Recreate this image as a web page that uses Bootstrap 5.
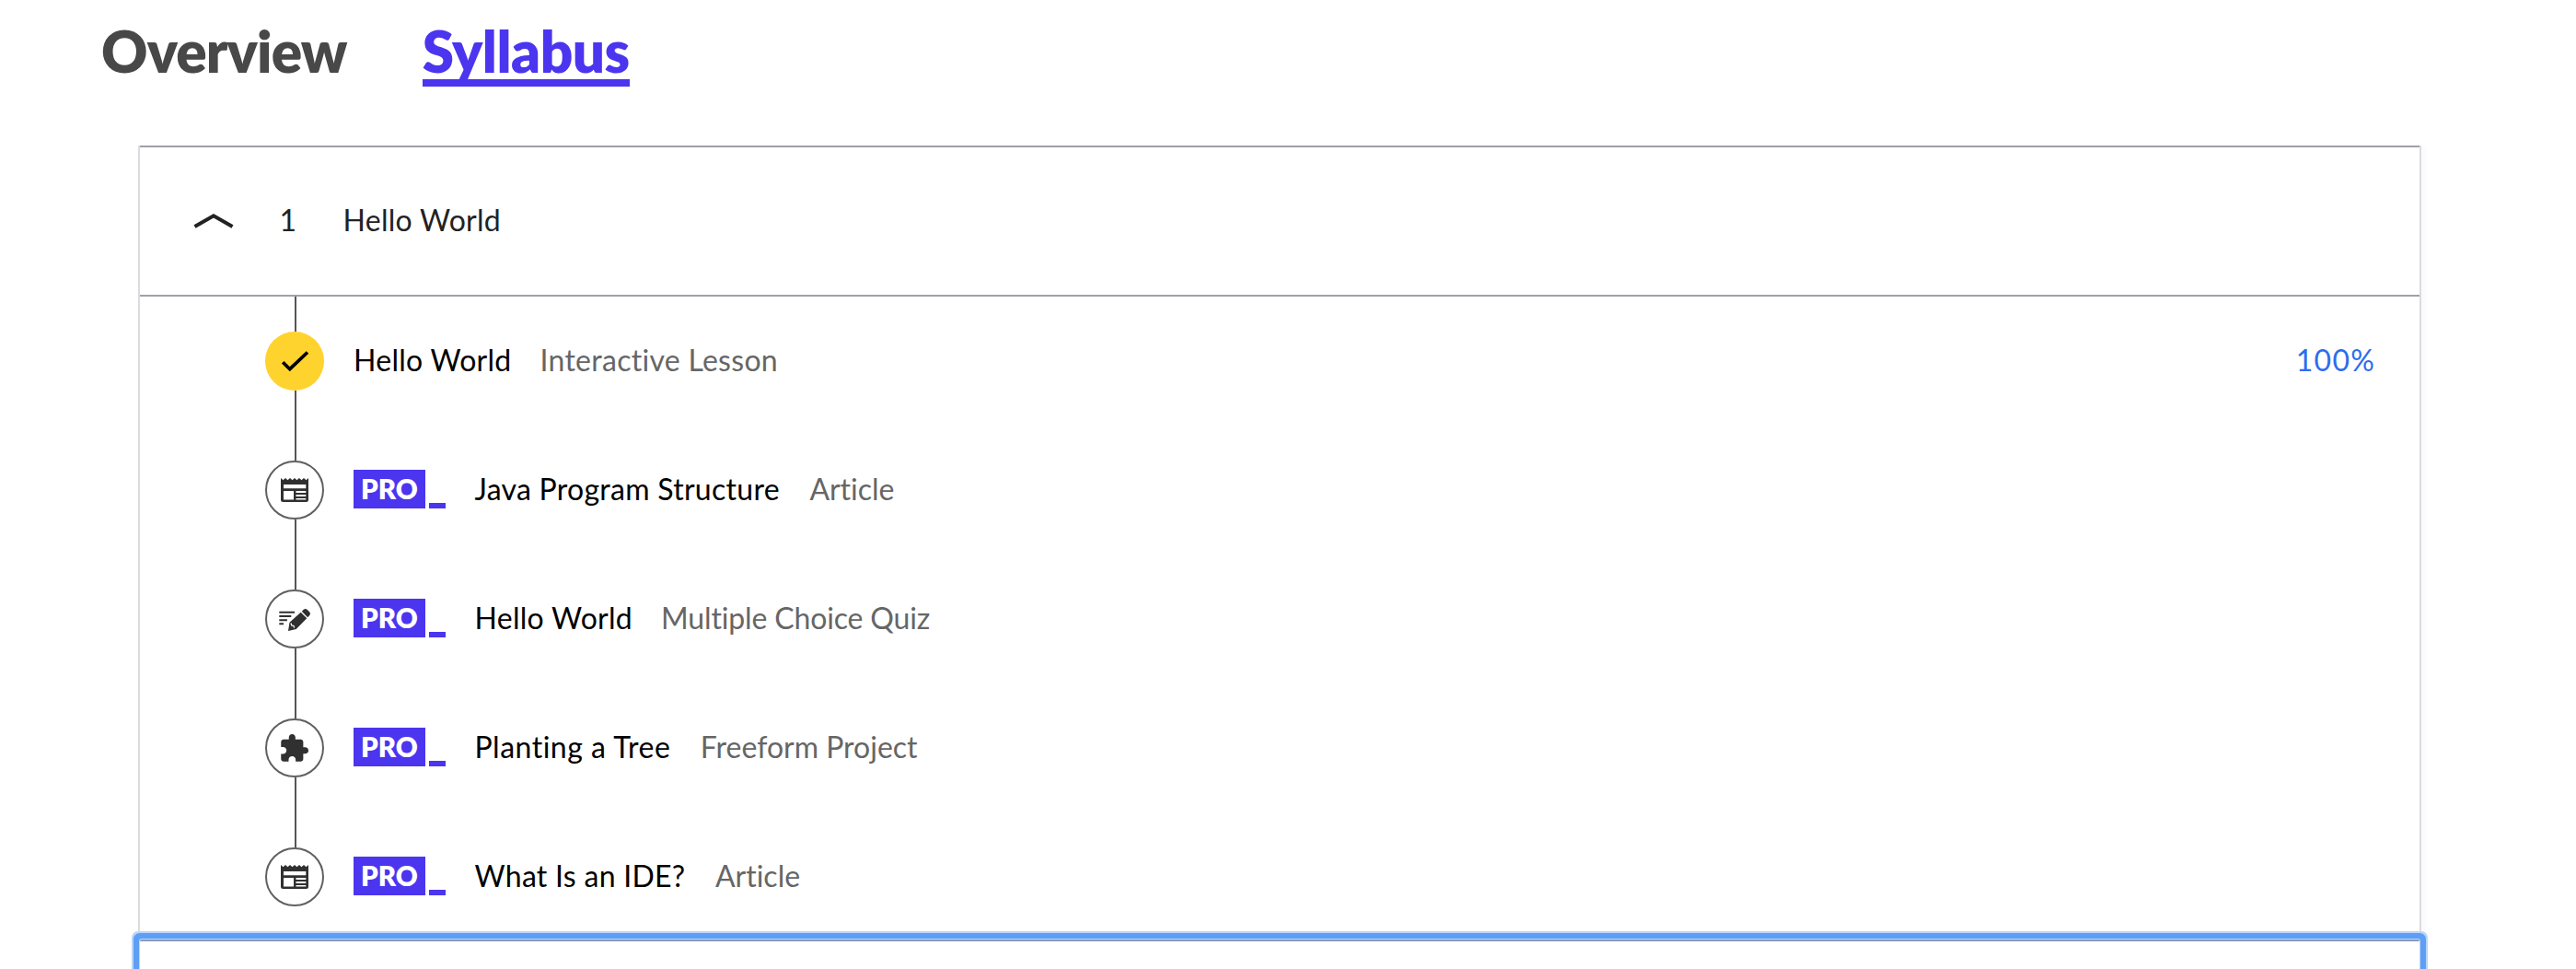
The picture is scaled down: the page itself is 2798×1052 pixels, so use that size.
<!DOCTYPE html>
<html lang="en">
<head>
<meta charset="utf-8">
<meta name="viewport" content="width=device-width, initial-scale=1">
<title>Syllabus</title>
<link rel="stylesheet" href="https://cdn.jsdelivr.net/npm/bootstrap@5.3.0/dist/css/bootstrap.min.css">
<script src="https://cdn.jsdelivr.net/npm/bootstrap@5.3.0/dist/js/bootstrap.bundle.min.js"></script>
<style>
  body { font: 400 32px/60px Lato, sans-serif; font-variant-ligatures: none; color: #000; height: 1052px; overflow: hidden; }
  .tabs { padding-left: 110px; gap: 82px; }
  .tab-link { font-size: 62px; font-weight: 800; line-height: 62px; padding-top: 24px; border-bottom: 8px solid transparent; color: #484848; text-decoration: none; white-space: nowrap; letter-spacing: -.5px; }
  .tab-overview { letter-spacing: -.85px; }
  .tab-link.current { color: #4b35ef; border-color: #4b35ef; }
  .syllabus { margin: 64px 168px 0 150px; border: solid #dcdce0; border-width: 0 2px; box-shadow: 5px 0 6px rgba(40,40,120,.025); }
  .module-head { height: 164px; border: solid #a0a0a8; border-width: 2px 0; padding-left: 58px; color: #222; }
  .module-head .chevron { width: 44px; height: 20px; margin-bottom: 2px; }
  .module-no { margin-left: 49.5px; width: 69px; }
  .copy { padding-bottom: 3px; white-space: nowrap; }
  .ls-a { letter-spacing: .28px; }
  .ls-b { letter-spacing: .5px; }
  .ls-c { letter-spacing: -.15px; }
  .lesson { height: 140px; padding-left: 136px; padding-right: 48px; }
  .lesson:last-child { height: 138px; }
  .rail { width: 64px; margin-right: 32px; }
  .rail .stem { width: 2px; height: 38px; background: #555; margin-left: 1px; }
  .lesson:last-child .stem:last-child { background: none; height: 34px; }
  .node { width: 64px; height: 64px; }
  .line { height: 64px; margin-top: 38px; }
  .pro { height: 42px; line-height: 42px; width: 78px; background: #4b35ef; color: #fff; font-size: 29.5px; font-weight: 800; padding-left: 8px; }
  .cursor { width: 18px; height: 6px; background: #4b35ef; margin: 0 31.5px 0 4px; }
  .pro-tag { margin-bottom: 2px; }
  .kind { color: #666; margin-left: 31px; }
  .pro-tag ~ .kind { margin-left: 32.5px; }
  .pro-tag ~ .kind.ls-c { margin-left: 31px; }
  .score { color: #2f6bef; letter-spacing: 1.2px; }
  .focused { height: 80px; background: #fff; border-top: 2px solid #8a99b8; border-radius: 2px; box-shadow: 0 0 0 1px #bcd8f8, 0 0 0 7px #5e9ff5, 0 0 0 9px #b9d6f8; }
</style>
</head>
<body>
<svg class="d-none" xmlns="http://www.w3.org/2000/svg">
  <symbol id="article" viewBox="0 0 64 64">
    <circle cx="32" cy="32" r="31" fill="#fff" stroke="#606060" stroke-width="2"/>
    <path fill="#303030" fill-rule="evenodd" d="M17 19l2.5 2.2L22 19l2.5 2.2L27 19l2.5 2.2L32 19l2.5 2.2L37 19l2.5 2.2L42 19l2.5 2.2L47 19v23.5a2.5 2.5 0 0 1-2.5 2.5h-25a2.5 2.5 0 0 1-2.5-2.5zM20 26v4.2h24.3V26zM20 33v9.5h11V33zM33.5 33v2h10.8v-2zM33.5 37v2h10.8v-2zM33.5 41v1.6h10.8V41z"/>
  </symbol>
  <symbol id="quiz" viewBox="0 0 64 64">
    <circle cx="32" cy="32" r="31" fill="#fff" stroke="#606060" stroke-width="2"/>
    <path fill="#303030" d="M15.3 23.8H32v2H15.3zM15.3 28h13v2h-13zM15.3 32.2h8.6v2h-8.6zM15.3 36.3H20v2h-4.7zM25 45l1.5-9.2 12.2-11 6.6 6.4-11.6 11.9zM39.8 23.8l2.3-2.2q1.6-1.4 3.2 0l3 3q1.5 1.8 0 3.4l-2.2 2.2z"/>
    <path fill="none" stroke="#fff" stroke-width="1.2" d="M28 36.5l.7 2.4 2.3.5.6 2.3"/>
  </symbol>
  <symbol id="project" viewBox="0 0 64 64">
    <circle cx="32" cy="32" r="31" fill="#fff" stroke="#606060" stroke-width="2"/>
    <path fill="#303030" transform="translate(14.4 15.6) scale(1.42)" d="M20.5 11H19V7c0-1.1-.9-2-2-2h-4V3.500C13 2.120 11.880 1 10.500 1S8 2.120 8 3.500V5H4c-1.100 0-1.990.9-1.990 2v3.800H3.500c1.490 0 2.700 1.210 2.700 2.700s-1.210 2.700-2.700 2.700H2V20c0 1.100.9 2 2 2h3.800v-1.500c0-1.490 1.210-2.700 2.700-2.700 1.490 0 2.700 1.210 2.700 2.700V22H17c1.100 0 2-.9 2-2v-4h1.500c1.380 0 2.500-1.120 2.500-2.500S21.880 11 20.500 11z"/>
  </symbol>
  <symbol id="done" viewBox="0 0 64 64">
    <circle cx="32" cy="32" r="32" fill="#ffd32e"/>
    <path fill="none" stroke="#000" stroke-width="3.7" d="M19.200 33.200l7.600 7.500L46 22.500"/>
  </symbol>
</svg>

<nav class="tabs d-flex">
  <a class="tab-link tab-overview" href="#">Overview</a>
  <a class="tab-link current" href="#">Syllabus</a>
</nav>

<main class="syllabus">
  <div class="module-head d-flex align-items-center">
    <svg class="chevron" viewBox="0 0 44 20"><path d="M1.500 17L22 5.300 42.500 17" fill="none" stroke="#222" stroke-width="4"/></svg>
    <span class="module-no copy">1</span>
    <span class="copy ls-a">Hello World</span>
  </div>
  <div>
    <div class="lesson d-flex">
      <div class="rail d-flex flex-column align-items-center flex-shrink-0"><i class="stem"></i><svg class="node"><use href="#done"/></svg><i class="stem"></i></div>
      <div class="line d-flex align-items-center flex-grow-1">
        <span class="copy ls-a">Hello World</span><span class="copy kind ls-a">Interactive Lesson</span>
        <span class="copy score ms-auto">100%</span>
      </div>
    </div>
    <div class="lesson d-flex">
      <div class="rail d-flex flex-column align-items-center flex-shrink-0"><i class="stem"></i><svg class="node"><use href="#article"/></svg><i class="stem"></i></div>
      <div class="line d-flex align-items-center flex-grow-1">
        <span class="pro-tag d-flex align-items-end"><b class="pro">PRO</b><i class="cursor"></i></span>
        <span class="copy ls-a">Java Program Structure</span><span class="copy kind">Article</span>
      </div>
    </div>
    <div class="lesson d-flex">
      <div class="rail d-flex flex-column align-items-center flex-shrink-0"><i class="stem"></i><svg class="node"><use href="#quiz"/></svg><i class="stem"></i></div>
      <div class="line d-flex align-items-center flex-grow-1">
        <span class="pro-tag d-flex align-items-end"><b class="pro">PRO</b><i class="cursor"></i></span>
        <span class="copy ls-a">Hello World</span><span class="copy kind ls-c">Multiple Choice Quiz</span>
      </div>
    </div>
    <div class="lesson d-flex">
      <div class="rail d-flex flex-column align-items-center flex-shrink-0"><i class="stem"></i><svg class="node"><use href="#project"/></svg><i class="stem"></i></div>
      <div class="line d-flex align-items-center flex-grow-1">
        <span class="pro-tag d-flex align-items-end"><b class="pro">PRO</b><i class="cursor"></i></span>
        <span class="copy ls-b">Planting a Tree</span><span class="copy kind">Freeform Project</span>
      </div>
    </div>
    <div class="lesson d-flex">
      <div class="rail d-flex flex-column align-items-center flex-shrink-0"><i class="stem"></i><svg class="node"><use href="#article"/></svg><i class="stem"></i></div>
      <div class="line d-flex align-items-center flex-grow-1">
        <span class="pro-tag d-flex align-items-end"><b class="pro">PRO</b><i class="cursor"></i></span>
        <span class="copy ls-a">What Is an IDE?</span><span class="copy kind">Article</span>
      </div>
    </div>
  </div>
  <div class="focused"></div>
</main>
</body>
</html>
